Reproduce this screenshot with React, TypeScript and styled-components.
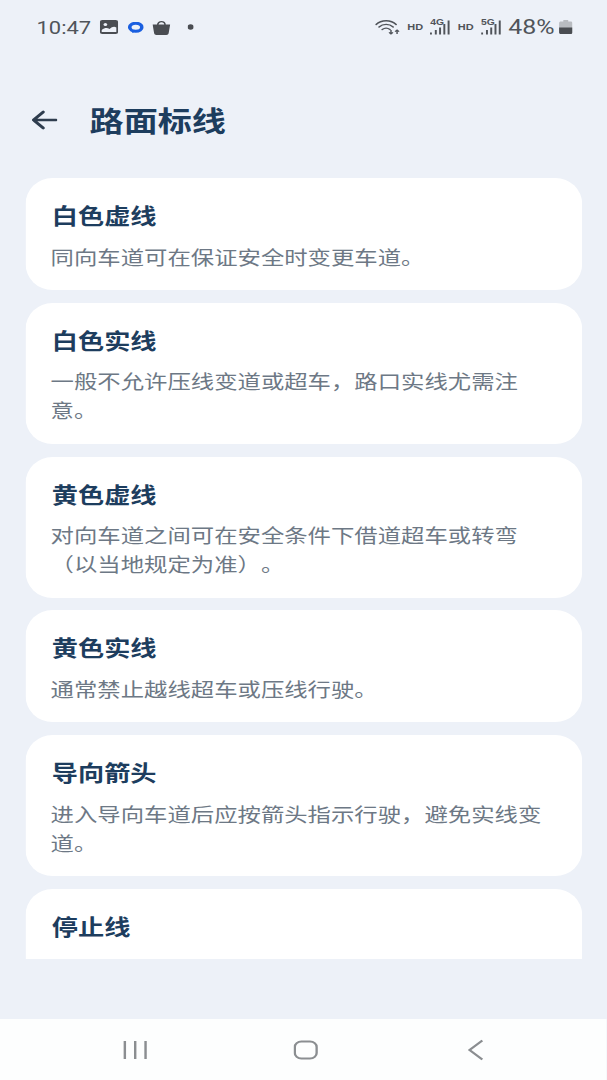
import React from "react";
import styled, { createGlobalStyle } from "styled-components";

const GlobalStyle = createGlobalStyle`
  html, body {
    margin: 0;
    padding: 0;
    width: 607px;
    height: 1080px;
    overflow: hidden;
    background: #edf1f8;
  }
`;

// the capture is squeezed from a taller phone, so everything is laid out narrow and stretched
const Screen = styled.div`
  display: flex;
  flex-direction: column;
  width: 498.4px;
  height: 1080px;
  background: #edf1f8;
  font-family: "Noto Sans CJK SC", "Noto Sans", sans-serif;
  text-spacing-trim: space-all;
  transform: scaleX(1.218);
  transform-origin: left top;
`;

const StatusBar = styled.div`
  display: flex;
  align-items: center;
  justify-content: space-between;
  height: 54px;
  padding: 0 28px 0 30px;
  flex-shrink: 0;
  color: #50545a;
`;
const StatusGroup = styled.div`
  display: flex;
  align-items: center;
`;
const Clock = styled.span`
  font-family: Roboto, sans-serif;
  font-size: 18px;
  margin-right: 7.5px;
`;
const Percent = styled.span`
  font-family: Roboto, sans-serif;
  font-size: 20.5px;
  margin: 0 4px 0 5px;
`;
const Hd = styled.span`
  font-family: "Liberation Sans", sans-serif;
  font-size: 9px;
  font-weight: 700;
  margin: 0 6px 0 5px;
`;
const Signal = styled.span`
  position: relative;
  display: block;
  width: 17.5px;
  height: 16px;
`;
const SignalLabel = styled.span`
  position: absolute;
  left: 0;
  top: -1px;
  font-family: "Liberation Sans", sans-serif;
  font-size: 8.5px;
  font-weight: 700;
  line-height: 9px;
`;
const StatusIcon = styled.svg<{ $gap?: number }>`
  display: block;
  margin-right: ${(p) => p.$gap ?? 0}px;
`;

const Header = styled.header`
  display: flex;
  align-items: center;
  gap: 26.5px;
  height: 50px;
  margin: 41px 0 33px;
  padding-left: 26px;
  flex-shrink: 0;
`;
const Title = styled.h1`
  margin: 0;
  font-size: 28px;
  font-weight: 700;
  line-height: 50px;
  color: #1d3d5e;
`;

const List = styled.div`
  display: flex;
  flex-direction: column;
  gap: 12.8px;
  height: 781px;
  margin: 0 20.5px;
  overflow: hidden;
  flex-shrink: 0;
`;
const Card = styled.section`
  box-sizing: border-box;
  min-height: 112px;
  padding: 22px 21.5px 18.5px 21px;
  background: #ffffff;
  border-radius: 22px / 26px;
  flex-shrink: 0;
`;
const CardTitle = styled.h2`
  margin: 0 0 13.5px;
  padding-left: 1px;
  font-size: 21.5px;
  font-weight: 700;
  line-height: 29px;
  color: #1d3d5e;
`;
const CardText = styled.p`
  margin: 0;
  font-size: 19.2px;
  font-weight: 400;
  line-height: 29px;
  color: #6d7885;
`;

const NavBar = styled.nav`
  display: grid;
  grid-template-columns: repeat(3, 139.6px);
  justify-content: center;
  align-items: center;
  justify-items: center;
  height: 61px;
  margin-top: auto;
  padding-left: 3px;
  background: #fdfefe;
  flex-shrink: 0;
`;

const cards = [
  { title: "白色虚线", text: "同向车道可在保证安全时变更车道。" },
  { title: "白色实线", text: "一般不允许压线变道或超车，路口实线尤需注意。" },
  { title: "黄色虚线", text: "对向车道之间可在安全条件下借道超车或转弯（以当地规定为准）。" },
  { title: "黄色实线", text: "通常禁止越线超车或压线行驶。" },
  { title: "导向箭头", text: "进入导向车道后应按箭头指示行驶，避免实线变道。" },
  { title: "停止线" },
];

function Bars() {
  return (
    <svg width="17.5" height="16" viewBox="0 0 17.5 16" style={{ display: "block" }}>
      <g fill="#50545a">
        <rect x="0" y="13.5" width="1.6" height="2" />
        <rect x="4" y="11" width="1.6" height="4.5" />
        <rect x="7.5" y="8.5" width="1.6" height="7" />
        <rect x="11" y="5" width="1.6" height="10.5" />
        <rect x="14.5" y="1.5" width="1.6" height="14" />
      </g>
    </svg>
  );
}

function App() {
  return (
    <>
      <GlobalStyle />
      <Screen>
        <StatusBar>
          <StatusGroup>
            <Clock>10:47</Clock>
            <StatusIcon $gap={8} width="15" height="14" viewBox="0 0 15 14">
              <rect width="15" height="14" rx="2" fill="#4a4d52" />
              <circle cx="4.5" cy="4.5" r="1.5" fill="#edf1f8" />
              <path d="M1.5 12 L1.5 10 C4 7.5 6 7.5 8 9 C10 6.5 12 6 13.5 7.5 L13.5 12 Z" fill="#edf1f8" />
            </StatusIcon>
            <StatusIcon $gap={7} width="13" height="11" viewBox="0 0 13 11">
              <ellipse cx="6.5" cy="5.2" rx="5" ry="4" fill="none" stroke="#1a5fe0" strokeWidth="3" />
              <path d="M4 8 L3.5 11 L7 9 Z" fill="#1a5fe0" />
            </StatusIcon>
            <StatusIcon $gap={14} width="15" height="15" viewBox="0 0 15 15">
              <path d="M4.5 5 C4.5 0.5 10.5 0.5 10.5 5" fill="none" stroke="#4a4d52" strokeWidth="1.3" />
              <path d="M0.3 4.5 H14.7 L13.5 13 C13.4 14.2 12.6 15 11.5 15 H3.5 C2.4 15 1.6 14.2 1.5 13 Z" fill="#4a4d52" />
            </StatusIcon>
            <StatusIcon width="5" height="6" viewBox="0 0 5 6">
              <ellipse cx="2.5" cy="3" rx="2.5" ry="2.8" fill="#4a4d52" />
            </StatusIcon>
          </StatusGroup>
          <StatusGroup>
            <StatusIcon width="21" height="16" viewBox="0 0 21 16">
              <g fill="none" stroke="#50545a" strokeWidth="1.4" strokeLinecap="round">
                <path d="M0.8 5.5 C5 0.5 13 0.5 17.2 5.5" />
                <path d="M3.2 8 C6.5 4.5 11.5 4.5 14.8 8" />
                <path d="M5.8 10.5 C7.8 8.8 10.2 8.8 12.2 10.5" />
              </g>
              <path d="M13 11 V15 M11.4 13.4 L13 15 L14.6 13.4 M18 15 V11 M16.4 12.6 L18 11 L19.6 12.6" stroke="#50545a" strokeWidth="1.2" fill="none" />
            </StatusIcon>
            <Hd>HD</Hd>
            <Signal>
              <Bars />
              <SignalLabel>4G</SignalLabel>
            </Signal>
            <Hd>HD</Hd>
            <Signal>
              <Bars />
              <SignalLabel>5G</SignalLabel>
            </Signal>
            <Percent>48%</Percent>
            <StatusIcon width="11" height="14" viewBox="0 0 11 14">
              <path d="M3.5 0 H7.5 V1.5 H9.5 C10.4 1.5 11 2.1 11 3 V12.5 C11 13.4 10.4 14 9.5 14 H1.5 C0.6 14 0 13.4 0 12.5 V3 C0 2.1 0.6 1.5 1.5 1.5 H3.5 Z" fill="#b9bcc1" />
              <path d="M0 7.5 H11 V12.5 C11 13.4 10.4 14 9.5 14 H1.5 C0.6 14 0 13.4 0 12.5 Z" fill="#4a4d52" />
            </StatusIcon>
          </StatusGroup>
        </StatusBar>

        <Header>
          <svg width="21" height="20" viewBox="0 0 21 20" fill="none" stroke="#2f3d4e" strokeWidth="2.6" strokeLinecap="round" strokeLinejoin="round">
            <path d="M20 10 H1.5 M9.5 2 L1.5 10 L9.5 18" />
          </svg>
          <Title>路面标线</Title>
        </Header>

        <List>
          {cards.map((card) => (
            <Card key={card.title}>
              <CardTitle>{card.title}</CardTitle>
              {card.text && <CardText>{card.text}</CardText>}
            </Card>
          ))}
        </List>

        <NavBar>
          <svg width="20" height="20" viewBox="0 0 20 20" stroke="#8b8e91" strokeWidth="2" fill="none">
            <path d="M1.5 1 V19 M10 1 V19 M18.5 1 V19" />
          </svg>
          <svg width="20" height="20" viewBox="0 0 20 20" stroke="#8b8e91" strokeWidth="2" fill="none">
            <rect x="1" y="1.5" width="18" height="17" rx="5.5" />
          </svg>
          <svg width="13" height="22" viewBox="0 0 13 22" stroke="#8b8e91" strokeWidth="2" fill="none">
            <path d="M12 1.5 L1.5 11 L12 20.5" />
          </svg>
        </NavBar>
      </Screen>
    </>
  );
}

export default App;
